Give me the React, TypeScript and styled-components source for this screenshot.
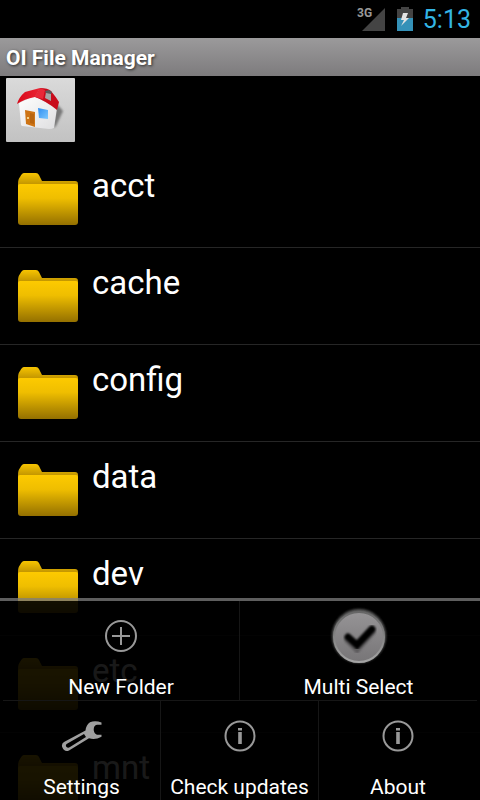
import React from "react";
import styled, { createGlobalStyle } from "styled-components";

const GlobalStyle = createGlobalStyle`
  *, *::before, *::after { box-sizing: border-box; }
  body {
    margin: 0;
    background: #000;
    color: #fff;
    font-family: Roboto, "Noto Sans", sans-serif;
  }
  button {
    margin: 0;
    padding: 0;
    border: 0;
    background: none;
    color: inherit;
    font: inherit;
    cursor: pointer;
  }
`;

const Screen = styled.div`
  position: relative;
  display: flex;
  flex-direction: column;
  height: 100vh;
  overflow: hidden;
  background: #000;
`;

const StatusBar = styled.header`
  display: flex;
  flex: none;
  align-items: center;
  justify-content: flex-end;
  height: 38px;
  padding-right: 9px;
`;

const SignalIcon = styled.svg`
  width: 30px;
  height: 26px;
  margin-right: 10px;
`;

const BatteryIcon = styled.svg`
  width: 18px;
  height: 26px;
  margin-right: 9px;
`;

const Clock = styled.time`
  padding-top: 2px;
  color: #33b5e5;
  font-size: 25px;
  line-height: 30px;
`;

const TitleBar = styled.div`
  flex: none;
  height: 38px;
  padding: 0 6px;
  background: linear-gradient(#9b9a9b, #7d7b7d);
`;

const Title = styled.h1`
  margin: 0;
  font-size: 21px;
  font-weight: 700;
  line-height: 40px;
  text-shadow: 1px 1px 3px rgba(0, 0, 0, 0.7);
`;

const PathBar = styled.nav`
  display: flex;
  flex: none;
  padding: 2px 6px 9px;
`;

const HomeButton = styled.button`
  display: flex;
  align-items: center;
  justify-content: center;
  width: 69px;
  height: 64px;
  border-radius: 1px;
  background: linear-gradient(#dadada, #c2c2c2);
`;

const FileList = styled.ul`
  flex: 1;
  min-height: 0;
  margin: 0;
  padding: 0;
  overflow: hidden;
  list-style: none;
`;

const FileItem = styled.li`
  border-bottom: 1px solid #262626;
`;

const FileButton = styled.button`
  display: flex;
  align-items: flex-start;
  gap: 14px;
  width: 100%;
  height: 96px;
  padding: 14px 18px;
  text-align: left;
`;

const FolderIcon = styled.svg`
  flex: none;
  width: 60px;
  height: 60px;
`;

const FileName = styled.span`
  font-size: 33px;
  line-height: 41px;
`;

const OptionsMenu = styled.div`
  position: absolute;
  right: 0;
  bottom: 0;
  left: 0;
  border-top: 3px solid rgba(125, 125, 125, 0.75);
  background: rgba(0, 0, 0, 0.9);
  background-clip: padding-box;
`;

const MenuRow = styled.div<{ $columns: number }>`
  display: grid;
  grid-template-columns: repeat(${(p) => p.$columns}, 1fr);
  margin: 0 3px;

  & + & {
    border-top: 1px solid #161616;
  }
`;

const MenuButton = styled.button`
  display: flex;
  flex-direction: column;
  align-items: center;
  gap: 4px;
  height: 99px;
  min-width: 0;

  &:not(:last-child) {
    border-right: 1px solid #161616;
  }
`;

const MenuGlyph = styled.span`
  display: flex;
  align-items: center;
  justify-content: center;
  height: 70px;
`;

const MenuLabel = styled.span`
  font-size: 21px;
  line-height: 25px;
  white-space: nowrap;
`;

const House = () => (
  <svg width="50" height="44" viewBox="0 0 50 44" aria-hidden="true">
    <defs>
      <linearGradient id="roof" x1="0" x2="1">
        <stop offset="0" stopColor="#d80a1a" />
        <stop offset="1" stopColor="#ea2434" />
      </linearGradient>
      <linearGradient id="wall" x1="0" x2="1" y1="0" y2="1">
        <stop offset="0" stopColor="#fff" />
        <stop offset="1" stopColor="#dedee0" />
      </linearGradient>
      <linearGradient id="pane" x1="0" x2="1" y1="0" y2="1">
        <stop offset="0" stopColor="#2f8df0" />
        <stop offset="1" stopColor="#7cc8ff" />
      </linearGradient>
      <filter id="soft" x="-50%" y="-50%" width="200%" height="200%">
        <feGaussianBlur stdDeviation="1" />
      </filter>
    </defs>
    <path d="M40 15 L47 23 L40 38 L37 40Z" fill="#777" filter="url(#soft)" />
    <path d="M3 15 L18 8 L41 20 L38 40 Q36 41 33 41 L6 38 L5 37Z" fill="url(#wall)" />
    <path d="M1 16 Q3 9 9 4 L24 0 L19 9 Q8 11 1 16Z" fill="url(#roof)" />
    <path d="M24 0 Q32 0 35 3 Q40 9 43 14 L41 22 Q30 13 19 9Z" fill="#c90b1b" />
    <path d="M24 0 L29 2 L27 11 L19 9Z" fill="#e92838" />
    <path d="M30 4 L35 4 L35 13 L29 10Z" fill="#a5a5a5" />
    <path d="M29 3 L33 2 L36 4 L35 6 L30 5Z" fill="#5b5b5b" />
    <path d="M9 22 L19 24 L19 39 L10 36Z" fill="#ce7415" />
    <path d="M14 25 L18 26 L18 36 L14 35Z" fill="#b9640e" />
    <circle cx="12" cy="30" r="1" fill="#fff0b0" />
    <path d="M22 20 L32 22 L32 31 L23 30Z" fill="url(#pane)" />
  </svg>
);

const Folder = () => {
  const id = React.useId();
  return (
    <FolderIcon viewBox="0 0 60 60" aria-hidden="true">
      <defs>
        <linearGradient id={`${id}back`} x1="0" x2="0" y1="0" y2="1">
          <stop offset="0" stopColor="#f7c400" />
          <stop offset="0.34" stopColor="#c49700" />
          <stop offset="1" stopColor="#a87f00" />
        </linearGradient>
        <linearGradient id={`${id}front`} x1="0" x2="0" y1="0" y2="1">
          <stop offset="0" stopColor="#fdca00" />
          <stop offset="0.35" stopColor="#efbe00" />
          <stop offset="1" stopColor="#947000" />
        </linearGradient>
      </defs>
      <path
        d="M0 19 Q0 14 2 12 Q4 8 6 8 H18 Q20 8 21 10 L24 16 H57 Q60 16 60 19 V40 H0Z"
        fill={`url(#${id}back)`}
      />
      <path
        d="M0 21 Q0 19 2 19 H58 Q60 19 60 21 V57 Q60 60 57 60 H3 Q0 60 0 57Z"
        fill={`url(#${id}front)`}
      />
    </FolderIcon>
  );
};

const NewIcon = () => (
  <svg width="34" height="34" viewBox="0 0 34 34" fill="none" stroke="#999" strokeWidth="2" aria-hidden="true">
    <circle cx="17" cy="17" r="15" />
    <path d="M17 8V26M8 17H26" />
  </svg>
);

const InfoIcon = () => (
  <svg width="34" height="34" viewBox="0 0 34 34" aria-hidden="true">
    <circle cx="17" cy="17" r="14.5" fill="none" stroke="#999" strokeWidth="2" />
    <path d="M15 9H19V11.5H15Z M15.2 13H18.8V25H15.2Z" fill="#999" />
  </svg>
);

const WrenchIcon = () => (
  <svg width="42" height="32" viewBox="0 0 42 32" aria-hidden="true">
    <path
      d="M40.5 2.5 Q34 0 29 2.3 Q25 5 24.5 10.5 L3 22 Q0 24 1.3 27.3 Q3.5 32.5 8 30.5 L28 18.3 Q34 20.5 40.5 16.7 V14.7 H36 Q33 13.5 32.7 10 Q32.7 5 36 4.8 H40.5Z M23 14 L25 17 L9 27 Q7 28.5 5.5 27 Q4 25 6 23.7Z"
      fill="#a0a0a0"
      fillRule="evenodd"
    />
  </svg>
);

const CheckIcon = () => (
  <svg width="60" height="60" viewBox="0 0 60 60" aria-hidden="true">
    <defs>
      <linearGradient id="disc" x1="0" x2="0" y1="0" y2="1">
        <stop offset="0" stopColor="#969496" />
        <stop offset="1" stopColor="#777577" />
      </linearGradient>
      <linearGradient id="rim" x1="0" x2="0" y1="0" y2="1">
        <stop offset="0" stopColor="#666" />
        <stop offset="1" stopColor="#a4a4a4" />
      </linearGradient>
      <filter id="blur" x="-20%" y="-20%" width="140%" height="140%">
        <feGaussianBlur stdDeviation="1" />
      </filter>
    </defs>
    <circle cx="30" cy="30" r="27" fill="#5c5c5c" filter="url(#blur)" />
    <circle cx="30" cy="31" r="25" fill="url(#disc)" stroke="url(#rim)" strokeWidth="2" />
    <path d="M19 34 L28 43 L43 26" fill="none" stroke="#5c5a5c" strokeWidth="7" strokeLinecap="round" filter="url(#blur)" />
    <path d="M19 31 L28 39 L43 23" fill="none" stroke="#000" strokeWidth="7" strokeLinecap="round" filter="url(#blur)" />
  </svg>
);

const folders = ["acct", "cache", "config", "data", "dev", "etc", "mnt"];

const menuRows = [
  [
    { label: "New Folder", icon: <NewIcon /> },
    { label: "Multi Select", icon: <CheckIcon /> },
  ],
  [
    { label: "Settings", icon: <WrenchIcon /> },
    { label: "Check updates", icon: <InfoIcon /> },
    { label: "About", icon: <InfoIcon /> },
  ],
];

export default function App() {
  return (
    <>
      <GlobalStyle />
      <Screen>
        <StatusBar>
          <SignalIcon viewBox="0 0 30 26" aria-hidden="true">
            <path d="M29 2V25H6Z" fill="#444" />
            <text x="1" y="11" fill="#999" fontSize="12" fontWeight="700" stroke="#000" strokeWidth="1" paintOrder="stroke">
              3G
            </text>
          </SignalIcon>
          <BatteryIcon viewBox="0 0 18 26" aria-hidden="true">
            <path d="M5 1H13V3H17V12H1V3H5Z" fill="#444" />
            <path d="M1 12H17V25H1Z" fill="#3491b8" />
            <path d="M7 7H12L10 12H13L5 20L8 14H5Z" fill="#e4e4e4" />
          </BatteryIcon>
          <Clock>5:13</Clock>
        </StatusBar>
        <TitleBar>
          <Title>OI File Manager</Title>
        </TitleBar>
        <PathBar>
          <HomeButton type="button" aria-label="Home">
            <House />
          </HomeButton>
        </PathBar>
        <FileList>
          {folders.map((name) => (
            <FileItem key={name}>
              <FileButton type="button">
                <Folder />
                <FileName>{name}</FileName>
              </FileButton>
            </FileItem>
          ))}
        </FileList>
        <OptionsMenu>
          {menuRows.map((items) => (
            <MenuRow key={items[0].label} $columns={items.length}>
              {items.map(({ label, icon }) => (
                <MenuButton key={label} type="button">
                  <MenuGlyph>{icon}</MenuGlyph>
                  <MenuLabel>{label}</MenuLabel>
                </MenuButton>
              ))}
            </MenuRow>
          ))}
        </OptionsMenu>
      </Screen>
    </>
  );
}
